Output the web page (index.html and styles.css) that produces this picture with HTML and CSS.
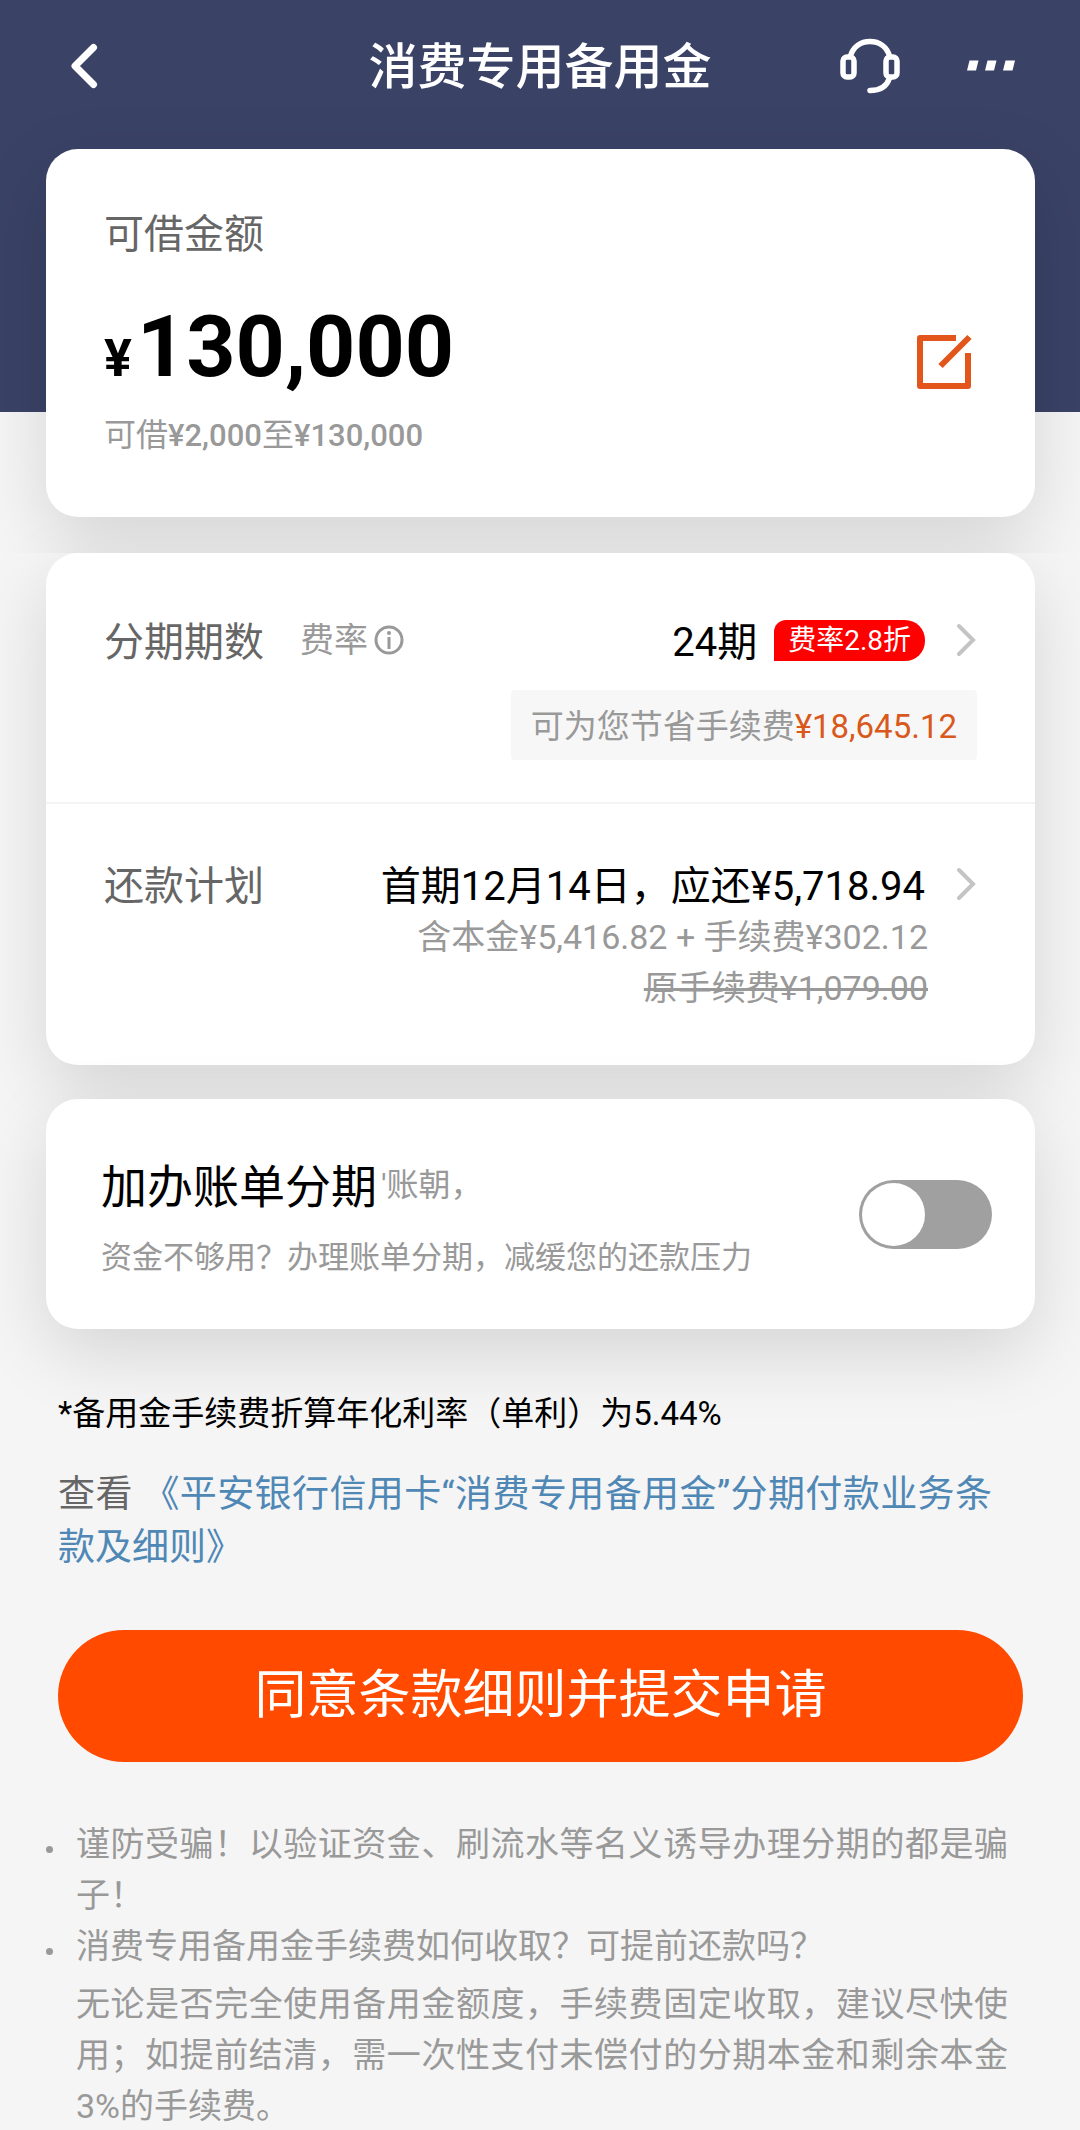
FILE: index.html
```html
<!DOCTYPE html>
<html lang="zh-CN">
<head>
<meta charset="utf-8">
<meta name="viewport" content="width=device-width, initial-scale=1">
<title>消费专用备用金</title>
<link rel="stylesheet" href="styles.css">
</head>
<body>
<div class="hero">
  <header class="navbar">
    <button class="icon-button back-button" type="button" aria-label="返回">
      <svg width="28" height="46" viewBox="0 0 28 46" fill="none" stroke="currentColor" stroke-width="7" stroke-linecap="round" stroke-linejoin="round"><path d="M23.500 4.500 5 23 23.500 41.500"/></svg>
    </button>
    <h1 class="navbar-title">消费专用备用金</h1>
    <div class="navbar-actions">
      <button class="icon-button" type="button" aria-label="客服">
        <svg width="60" height="56" viewBox="0 0 60 56" fill="none" stroke="currentColor" stroke-width="5.500" stroke-linecap="round"><rect x="3" y="19" width="11" height="20" rx="4"/><rect x="46" y="19" width="11" height="20" rx="4"/><path d="M10.500 18C13 9 20.500 3.500 30 3.500S47 9 49.500 18M49.500 40C47 48 40.500 52.500 30 52.500"/></svg>
      </button>
      <button class="icon-button" type="button" aria-label="更多">
        <svg width="50" height="56" viewBox="0 0 50 56" fill="currentColor"><path d="M3.500 22.500h9l-2.500 10H1zM21.500 22.500h9l-2.500 10h-9zM39.500 22.500h9.500l-2.500 10H37z"/></svg>
      </button>
    </div>
  </header>
  <section class="card amount-card">
    <div>
      <h2 class="label">可借金额</h2>
      <p class="amount"><span class="amount-unit">¥</span>130,000</p>
      <p class="amount-range">可借<b>¥2,000</b>至<b>¥130,000</b></p>
    </div>
    <button class="icon-button edit-button" type="button" aria-label="修改金额">
      <svg width="56" height="56" viewBox="0 0 56 56" fill="none" stroke="currentColor" stroke-width="6" stroke-linejoin="round"><path d="M40 4H4V52H52V19M53.500 3 24.500 32"/></svg>
    </button>
  </section>
</div>
<main>
  <section class="card">
    <div class="plan-row term-row">
      <div class="plan-line">
        <h2 class="label">分期期数</h2>
        <button class="rate-button" type="button">费率<svg width="30" height="30" viewBox="0 0 30 30" fill="none" stroke="currentColor" stroke-width="3"><circle cx="15" cy="15" r="13"/><path d="M15 12V24"/><circle cx="15" cy="8" r="2" fill="currentColor" stroke="none"/></svg></button>
        <button class="value-button" type="button"><span class="value">24期</span><span class="badge">费率2.8折</span>
          <svg class="chevron" width="20" height="34" viewBox="0 0 20 34" fill="none" stroke="currentColor" stroke-width="4" stroke-linecap="round"><path d="M2 3 16 17 2 31"/></svg>
        </button>
      </div>
      <p class="saving">可为您节省手续费<b>¥18,645.12</b></p>
    </div>
    <div class="plan-row repay-row">
      <div class="plan-line">
        <h2 class="label">还款计划</h2>
        <button class="value-button" type="button"><span class="value">首期12月14日，应还¥5,718.94</span>
          <svg class="chevron" width="20" height="34" viewBox="0 0 20 34" fill="none" stroke="currentColor" stroke-width="4" stroke-linecap="round"><path d="M2 3 16 17 2 31"/></svg>
        </button>
      </div>
      <p class="detail">含本金¥5,416.82 + 手续费¥302.12</p>
      <p class="detail"><s>原手续费¥1,079.00</s></p>
    </div>
  </section>
  <section class="card bill-card">
    <div>
      <h2 class="bill-title"><label for="bill">加办账单分期</label><small>'账朝，</small></h2>
      <p class="bill-note">资金不够用？办理账单分期，减缓您的还款压力</p>
    </div>
    <input class="switch" type="checkbox" role="switch" id="bill">
  </section>
  <p class="rate-note">*备用金手续费折算年化利率（单利）为5.44%</p>
  <p class="terms">查看 <a href="#terms">《平安银行信用卡“消费专用备用金”分期付款业务条款及细则》</a></p>
  <button class="submit" type="button">同意条款细则并提交申请</button>
  <ul class="tips">
    <li><p>谨防受骗！以验证资金、刷流水等名义诱导办理分期的都是骗子！</p></li>
    <li><div><p>消费专用备用金手续费如何收取？可提前还款吗？</p>
      <p class="answer">无论是否完全使用备用金额度，手续费固定收取，建议尽快使用；如提前结清，需一次性支付未偿付的分期本金和剩余本金3%的手续费。</p></div></li>
  </ul>
</main>
</body>
</html>
```
FILE: styles.css
```css
* { box-sizing: border-box; }

body {
  margin: 0;
  background: #f5f5f5;
  color: #000;
  font-family: Roboto, "Noto Sans CJK SC", sans-serif;
}

h1, h2, p, ul { margin: 0; padding: 0; font-weight: 400; }

button {
  padding: 0;
  border: 0;
  background: none;
  color: inherit;
  font: inherit;
}

svg { display: block; }

/* Top area: navy backdrop behind the first card */
.hero {
  overflow: hidden;
  padding-bottom: 36px;
  background: linear-gradient(#3a4266 412px, transparent 412px);
}

.navbar {
  display: grid;
  grid-template-columns: 1fr auto 1fr;
  align-items: center;
  height: 132px;
  margin-bottom: 17px;
  padding: 0 64px;
  color: #fff;
}

.navbar-title {
  padding-top: 4px;
  font-size: 49px;
  line-height: 60px;
  font-weight: 500;
}

.navbar-actions {
  display: flex;
  justify-content: flex-end;
  gap: 66px;
}

.icon-button { justify-self: start; }
.back-button { padding-left: 6px; }

.card {
  margin: 0 45px 34px 46px;
  border-radius: 32px;
  background: #fff;
  box-shadow: 0 24px 72px rgba(0, 0, 0, .13);
}

.label {
  padding-top: 5px;
  color: #666;
  font-size: 40px;
  line-height: 50px;
}

.amount-card {
  display: flex;
  align-items: center;
  justify-content: space-between;
  margin-bottom: 0;
  padding: 56px 63px 59px 58px;
}

.amount {
  margin: 43px 0 22px;
  font-size: 86px;
  line-height: 88px;
  font-weight: 700;
}

.amount-unit { margin-right: 5px; font-size: 52px; line-height: 52px; }

.amount-range { color: #999; font-size: 32px; line-height: 44px; }
.amount-range b { font-size: 31px; font-weight: 500; }

.edit-button { margin-top: 60px; color: #e2561b; }

/* Instalment plan */
.plan-row { padding-left: 58px; padding-right: 58px; }
.term-row { padding-top: 59px; padding-bottom: 42px; border-bottom: 2px solid #f4f4f4; }
.repay-row { padding-top: 52px; padding-bottom: 51px; }

.plan-line { display: flex; align-items: center; height: 56px; }

.rate-button {
  display: flex;
  align-items: center;
  gap: 6px;
  margin-left: 36px;
  color: #999;
  font-size: 34px;
  line-height: 50px;
}

.value-button {
  display: flex;
  align-items: center;
  margin-left: auto;
  font-size: 40px;
  line-height: 50px;
}

.value { padding-top: 5px; }

.badge {
  margin-left: 17px;
  padding: 0 14px;
  border-radius: 12px 20px 20px 0;
  background: #fe0000;
  color: #fff;
  font-size: 28px;
  line-height: 41px;
}

.chevron { margin-left: 32px; color: #c4c4c4; }

.saving {
  width: fit-content;
  margin: 22px 0 0 auto;
  padding: 4px 20px 0;
  border-radius: 4px;
  background: #f7f7f7;
  color: #999;
  font-size: 33px;
  line-height: 66px;
}

.saving b { color: #d9581c; font-weight: 400; }

.detail {
  padding-right: 49px;
  color: #999;
  font-size: 34px;
  line-height: 51px;
  text-align: right;
}

/* Bill instalment switch */
.bill-card {
  display: flex;
  align-items: center;
  justify-content: space-between;
  margin-bottom: 60px;
  padding: 58px 43px 49px 55px;
}

.bill-title {
  display: flex;
  gap: 4px;
  font-size: 46px;
  line-height: 60px;
}

.bill-title small {
  color: #999;
  font-size: 32px;
  line-height: 56px;
  font-weight: 400;
}

.bill-note { margin-top: 19px; color: #999; font-size: 31px; line-height: 44px; }

.switch {
  appearance: none;
  flex: none;
  width: 133px;
  height: 69px;
  margin: 0 0 9px;
  padding: 3px;
  border-radius: 35px;
  background: #a0a0a0;
}

.switch::before {
  content: "";
  display: block;
  width: 63px;
  height: 63px;
  border-radius: 50%;
  background: #fff;
}

.switch:checked { background: #ff4a00; }
.switch:checked::before { margin-left: auto; }

.rate-note { margin: 0 58px 29px; font-size: 33px; line-height: 50px; }

.terms {
  margin: 0 88px 56px 58px;
  color: #666;
  font-size: 37px;
  line-height: 53px;
  text-align: justify;
}

.terms a { color: #4f87b5; text-decoration: none; }

.submit {
  display: block;
  width: calc(100% - 115px);
  margin: 0 57px 57px 58px;
  border-radius: 66px;
  background: #ff4a00;
  color: #fff;
  font-size: 52px;
  line-height: 132px;
}

.tips {
  margin: 0 72px 0 46px;
  color: #999;
  font-size: 34px;
  line-height: 51px;
  list-style: none;
  text-align: justify;
}

.tips li { display: grid; grid-template-columns: 30px 1fr; }

.tips li::before {
  content: "";
  width: 7px;
  height: 7px;
  margin-top: 27px;
  border-radius: 50%;
  background: #999;
}

.answer { margin-top: 7px; }
```
